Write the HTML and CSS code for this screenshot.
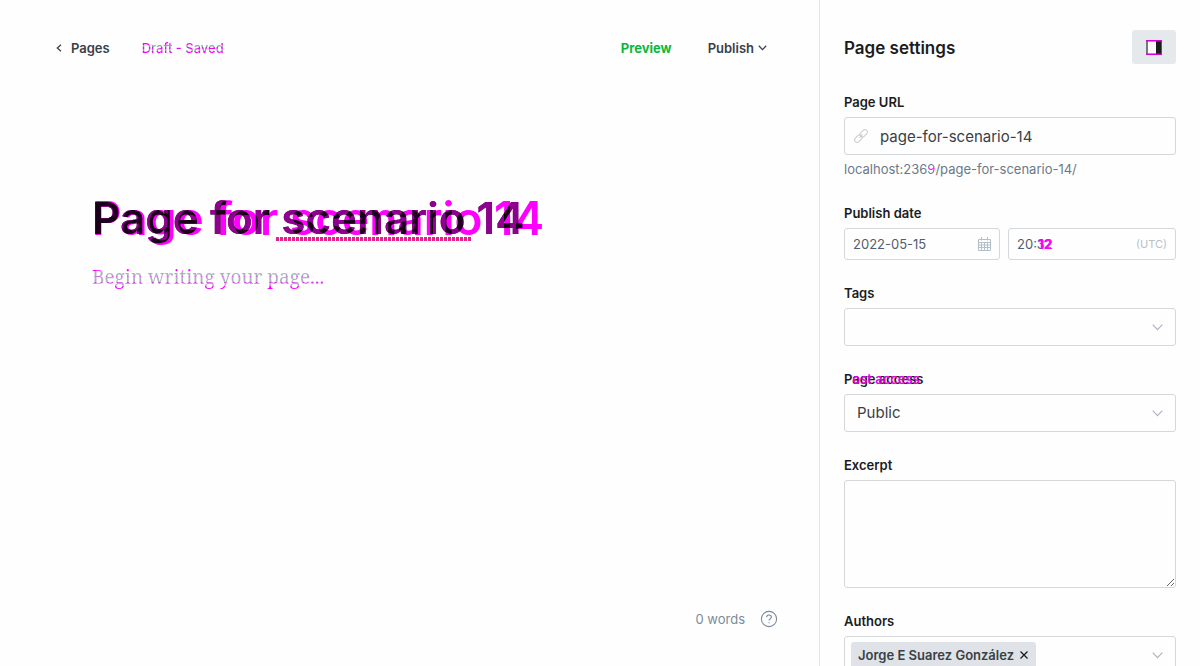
FILE: index.html
```
<!DOCTYPE html>
<html lang="en">
<head>
<meta charset="utf-8">
<meta name="viewport" content="width=device-width, initial-scale=1">
<title>Page for scenario 14</title>
<link rel="stylesheet" href="styles.css">
</head>
<body>
<div class="app">
  <main class="editor">
    <header class="toolbar">
      <a class="back" href="#"><svg width="6" height="8" viewBox="0 0 6 8"><path d="M5 .7 1.3 4 5 7.3"/></svg>Pages</a>
      <span class="status">Draft - Saved</span>
      <nav class="actions">
        <button class="preview" type="button">Preview</button>
        <button class="publish" type="button">Publish<svg width="9" height="6" viewBox="0 0 9 6"><path d="M.8.8 4.5 4.6 8.2.8"/></svg></button>
      </nav>
    </header>
    <section class="canvas">
      <h1 class="title" data-title="Page for scenario 14">Page for scenario 14<span class="spelling"></span></h1>
      <p class="placeholder">Begin writing your page...</p>
    </section>
    <footer class="footer">
      <span>0 words</span>
      <a class="help" href="#" aria-label="Help"><svg width="18" height="18" viewBox="0 0 18 18"><circle cx="9" cy="9" r="7.6"/><path d="M6.6 7.2C6.6 5.8 7.6 5 9 5s2.4.9 2.4 2.1C11.4 8.700 9 8.800 9 10.600M9 12.300v1"/></svg></a>
    </footer>
  </main>

  <aside class="settings">
    <header class="settings-head">
      <h2>Page settings</h2>
      <button class="toggle" type="button" aria-label="Toggle settings"><svg width="16" height="15" viewBox="0 0 16 15"><path fill="#74777b" d="M0 1h2v13H0z"/><path fill="#fafafa" d="M2 2h8v11H2z"/><path fill="#1b1c20" d="M10 1h6v13h-6z"/><path fill="#d800d8" d="M0 0h16v1.500H0zM0 13.500h16V15H0zM15 1h1v13h-1z"/></svg></button>
    </header>
    <form class="fields">
      <div class="field">
        <label for="url">Page URL</label>
        <div class="box">
          <svg class="link" width="14" height="14" viewBox="0 0 14 14"><g transform="rotate(-45 7 7)"><rect x="-.9" y="4.500" width="8.400" height="5" rx="2.500"/><rect x="6.500" y="4.500" width="8.400" height="5" rx="2.500"/><path d="M4.500 7h5"/></g></svg>
          <input id="url" type="text" value="page-for-scenario-14">
        </div>
        <p class="hint">localhost:236<span class="port">9</span>/page-for-scenario-14/</p>
      </div>
      <div class="field">
        <label for="date">Publish date</label>
        <div class="when">
          <div class="box small date">
            <input id="date" type="text" value="2022-05-15">
            <svg width="13" height="14" viewBox="0 0 13 14"><path d="M.5 2.500h12v11H.5zM.5 5.500h12M.5 8h12M.5 10.500h12M3.500 5v8.500M6.500 5v8.500M9.500 5v8.500M3.500 0v3.500M9.500 0v3.500"/></svg>
          </div>
          <div class="box small time" data-minutes="12">
            <input type="text" value="20:32" aria-label="Publish time">
            <span class="zone">(UTC)</span>
          </div>
        </div>
      </div>
      <div class="field">
        <label for="tags">Tags</label>
        <div class="box">
          <input id="tags" type="text">
          <svg class="chevron" width="11" height="7" viewBox="0 0 11 7"><path d="m.7.7 4.800 5L10.300.7"/></svg>
        </div>
      </div>
      <div class="field">
        <label class="access" for="access" data-was="Post access">Page access</label>
        <div class="box">
          <select id="access"><option>Public</option><option>Members only</option></select>
          <svg class="chevron" width="11" height="7" viewBox="0 0 11 7"><path d="m.7.7 4.800 5L10.300.7"/></svg>
        </div>
      </div>
      <div class="field">
        <label for="excerpt">Excerpt</label>
        <textarea id="excerpt"></textarea>
      </div>
      <div class="field">
        <label for="authors">Authors</label>
        <div class="box authors">
          <span class="token">Jorge E Suarez González<button type="button" aria-label="Remove author"><svg width="8" height="8" viewBox="0 0 8 8"><path d="m.5.5 7 7M7.500.5l-7 7"/></svg></button></span>
          <input id="authors" type="text">
          <svg class="chevron" width="11" height="7" viewBox="0 0 11 7"><path d="m.7.7 4.800 5L10.300.7"/></svg>
        </div>
      </div>
    </form>
  </aside>
</div>
</body>
</html>
```
FILE: styles.css
```
* { box-sizing: border-box; }
body {
  margin: 0;
  background: #fefefe;
  color: #1b1c20;
  font: 13px/20px Inter, "Liberation Sans", sans-serif;
}
svg { display: block; flex: none; fill: none; stroke: currentColor; }
button, input, select, textarea { font: inherit; color: inherit; background: none; border: 0; padding: 0; outline: 0; }
a { color: inherit; text-decoration: none; }
h1, h2, p { margin: 0; }

.app { display: flex; height: 100vh; overflow: hidden; }
.editor { flex: 1; display: flex; flex-direction: column; min-width: 0; }

.toolbar { display: flex; align-items: center; padding: 38px 52px 0 56px; color: #394047; font-weight: 600; }
.back { display: flex; align-items: center; gap: 9px; }
.back svg, .publish svg { stroke-width: 1.3; }
.status {
  margin-left: 32px;
  font-weight: 500;
  color: transparent;
  background: linear-gradient(#f0f 7px, #95a1af 7px 9px, #e010e8 9px 11px, #95a1af 11px 13px, #f0f 13px);
  -webkit-background-clip: text;
  background-clip: text;
}
.actions { margin-left: auto; display: flex; gap: 36px; }
.preview { color: #0ab83d; font-weight: 700; }
.publish { display: flex; align-items: center; gap: 4px; font-weight: 600; }

.canvas { flex: 1; padding: 130px 92px 0; }
/* Two renderings of the title; the shared area comes out dark. */
.title {
  position: relative;
  isolation: isolate;
  width: max-content;
  font-size: 44px;
  line-height: 60px;
  font-weight: 600;
  color: #2a002a;
}
.title::before, .title::after { content: attr(data-title); position: absolute; left: 0; top: 0; white-space: nowrap; mix-blend-mode: difference; }
.title::before { color: #f0f; font-size: 46px; }
.title::after { color: #ba00ba; }
.spelling { position: absolute; left: 184px; top: 49px; width: 195px; height: 4px; background: repeating-linear-gradient(90deg, #e3228c 0 3px, transparent 3px 4px); }
.placeholder {
  width: max-content;
  margin-top: 14px;
  font: 19px/30px "Noto Serif", "Liberation Serif", serif;
  color: transparent;
  background: linear-gradient(#f0f 9px, #abb4be 9px 14px, #d070e0 14px 15px, #abb4be 15px 20px, #d040e0 20px 21px, #abb4be 21px 24px, #f0f 24px);
  -webkit-background-clip: text;
  background-clip: text;
}
.footer { display: flex; justify-content: flex-end; align-items: center; gap: 15px; padding: 0 41px 37px; color: #7c8b9a; }
.help svg { stroke-width: 1.1; }

.settings { width: 381px; flex: none; border-left: 1px solid #e3e6e9; padding: 30px 24px 0; }
.settings-head { display: flex; align-items: center; justify-content: space-between; }
.settings-head h2 { font-size: 17px; line-height: 24px; font-weight: 600; padding-top: 2px; }
.toggle { display: grid; place-items: center; width: 44px; height: 34px; border-radius: 3px; background: #e6e9ec; }
.toggle svg { stroke: none; }

.fields { display: flex; flex-direction: column; gap: 23px; margin-top: 28px; }
.field { display: flex; flex-direction: column; }
.field label { align-self: flex-start; margin-bottom: 5px; line-height: 20px; font-weight: 600; }
.box { display: flex; align-items: center; height: 38px; padding: 0 12px; border: 1px solid #d5d8db; border-radius: 3px; color: #394047; font-size: 15px; }
.box input, .box select { flex: 1; min-width: 0; width: 100%; height: 100%; appearance: none; }
.link { margin: 0 12px 0 -3px; color: #c9cccf; stroke-width: 1; }
.hint { margin-top: 4px; line-height: 21px; color: #6b7a89; }
.port { background: linear-gradient(#6b7a89 7px, #f0f 7px 10px, #6b7a89 10px); -webkit-background-clip: text; background-clip: text; color: transparent; }
.when { display: grid; grid-template-columns: 156fr 168fr; gap: 8px; }
.small { height: 32px; padding: 0 8px; font-size: 13px; color: #525e6b; }
.date svg { color: #b3bfca; stroke-width: 1; }
.time { position: relative; }
.time::after { content: attr(data-minutes); position: absolute; left: 29px; top: 5px; color: #f0f; font-weight: 800; }
.zone { font-size: 11px; color: #b8c1ca; }
.chevron { color: #abb4be; stroke-width: 1.1; }
.access { position: relative; }
.access::after { content: attr(data-was); position: absolute; left: 0; top: 0; color: #e000e0; clip-path: inset(0 0 0 8px); white-space: nowrap; }
textarea { display: block; width: 100%; height: 108px; border: 1px solid #d5d8db; border-radius: 3px; resize: vertical; }
.authors { padding-left: 6px; }
.token { display: flex; align-items: center; gap: 6px; height: 26px; padding: 0 8px 0 7px; border-radius: 3px; background: #dfe3e7; font-size: 13px; font-weight: 600; white-space: nowrap; }
.token svg { stroke-width: 1.3; color: #1b1c20; }
```
